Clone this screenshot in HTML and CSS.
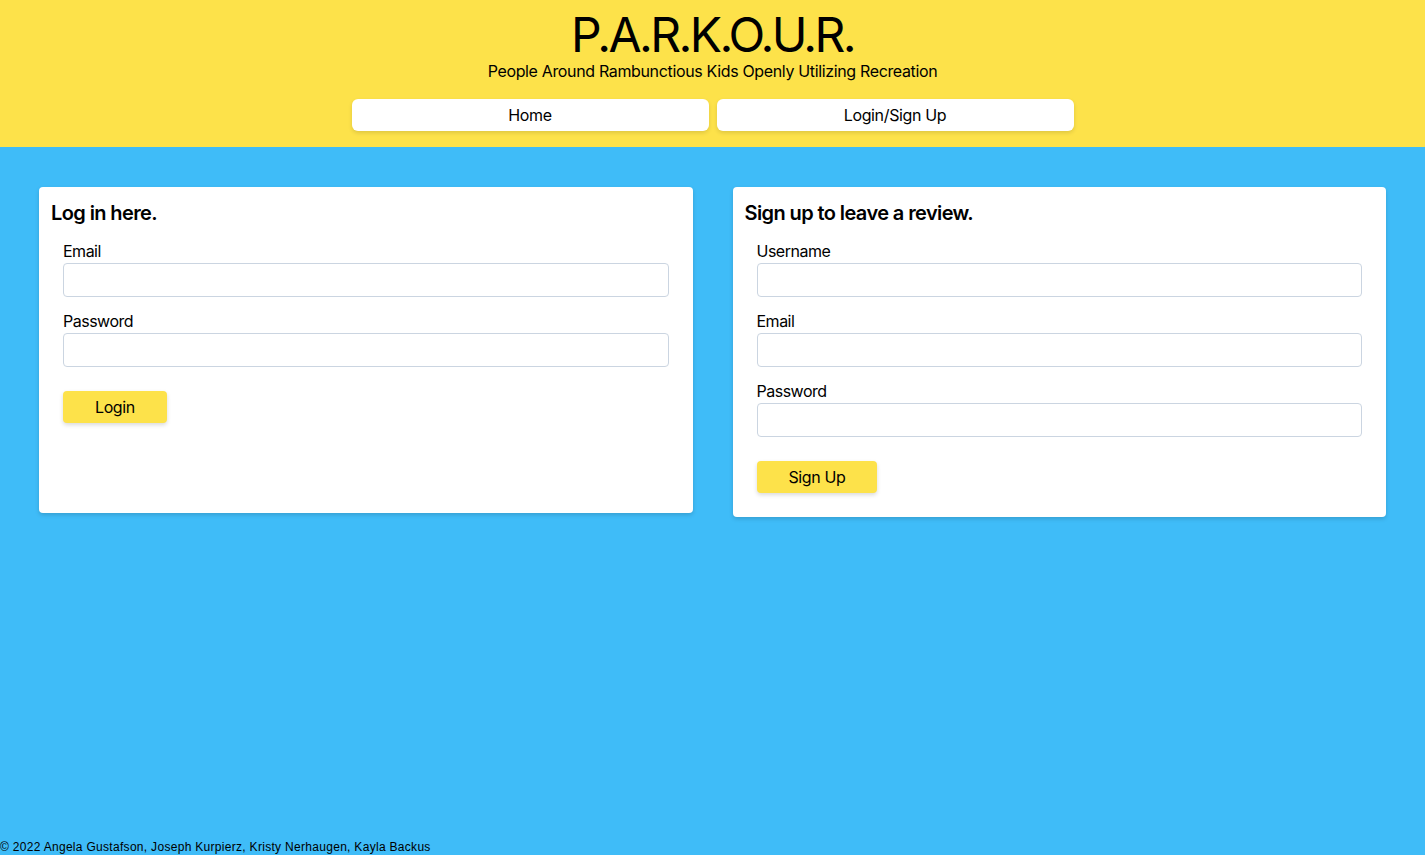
FILE: index.html
```html
<!DOCTYPE html>
<html lang="en">
<head>
<meta charset="utf-8">
<title>P.A.R.K.O.U.R.</title>
<link rel="stylesheet" href="styles.css">
</head>
<body>
<div class="page">
  <header class="header">
    <h1 class="title">P.A.R.K.O.U.R.</h1>
    <p class="subtitle">People Around Rambunctious Kids Openly Utilizing Recreation</p>
    <nav class="nav">
      <a class="nav-btn" href="#">Home</a>
      <a class="nav-btn" href="#">Login/Sign Up</a>
    </nav>
  </header>
  <main class="main">
    <section class="card card-login">
      <h2 class="card-title">Log in here.</h2>
      <form class="form">
        <label class="label">Email</label>
        <input class="input" type="email">
        <label class="label">Password</label>
        <input class="input" type="password">
        <button class="btn" type="button">Login</button>
      </form>
    </section>
    <section class="card">
      <h2 class="card-title">Sign up to leave a review.</h2>
      <form class="form">
        <label class="label">Username</label>
        <input class="input" type="text">
        <label class="label">Email</label>
        <input class="input" type="email">
        <label class="label">Password</label>
        <input class="input" type="password">
        <button class="btn" type="button">Sign Up</button>
      </form>
    </section>
  </main>
  <footer class="footer">© 2022 Angela Gustafson, Joseph Kurpierz, Kristy Nerhaugen, Kayla Backus</footer>
</div>
</body>
</html>
```

FILE: styles.css
```css
* { box-sizing: border-box; }
html, body { margin: 0; padding: 0; }
body {
  font-family: Inter, "Noto Sans", sans-serif;
  color: #000;
  background: #3fbcf8;
  letter-spacing: -0.35px;
}
.page {
  min-height: 100vh;
  display: flex;
  flex-direction: column;
}
.header {
  background: #fde24a;
  display: flex;
  flex-direction: column;
  align-items: center;
  padding: 11px 0 16px;
}
.title {
  margin: 0;
  font-size: 48px;
  line-height: 48px;
  font-weight: 400;
  letter-spacing: -2.6px;
}
.subtitle {
  margin: 0;
  font-size: 16px;
  line-height: 24px;
}
.nav {
  margin-top: 16px;
  display: flex;
  gap: 8px;
}
.nav-btn {
  width: 357px;
  height: 32px;
  background: #fff;
  border-radius: 6px;
  display: flex;
  align-items: center;
  justify-content: center;
  color: #000;
  text-decoration: none;
  font-size: 16px;
  box-shadow: 0 2px 4px rgba(0,0,0,0.12);
}
.main {
  display: grid;
  grid-template-columns: 1fr 1fr;
  gap: 40px;
  padding: 40px 39px;
  align-items: start;
}
.card {
  background: #fff;
  border-radius: 4px;
  padding: 12px 24px 24px 12px;
  box-shadow: 0 2px 4px rgba(0,0,0,0.15);
}
.card-login { min-height: 326px; }
.card-title {
  margin: 0;
  font-size: 20px;
  line-height: 28px;
  font-weight: 600;
  letter-spacing: -0.6px;
}
.form {
  display: flex;
  flex-direction: column;
  align-items: flex-start;
  margin-top: 12px;
  padding-left: 12px;
}
.label {
  font-size: 16px;
  line-height: 24px;
  letter-spacing: -0.5px;
}
.input {
  width: 100%;
  height: 34px;
  border: 1px solid #cbd5e1;
  border-radius: 4px;
  margin-bottom: 12px;
  font: inherit;
}
.btn {
  margin-top: 12px;
  height: 32px;
  padding: 0 32px;
  border: none;
  border-radius: 4px;
  background: #fde24a;
  font: inherit;
  font-size: 16px;
  color: #000;
  letter-spacing: -0.4px;
  box-shadow: 0 2px 4px rgba(0,0,0,0.15);
}
.footer {
  margin-top: auto;
  font-family: "Liberation Sans", Arial, sans-serif;
  font-size: 12px;
  line-height: 16px;
  letter-spacing: 0.3px;
}
```
